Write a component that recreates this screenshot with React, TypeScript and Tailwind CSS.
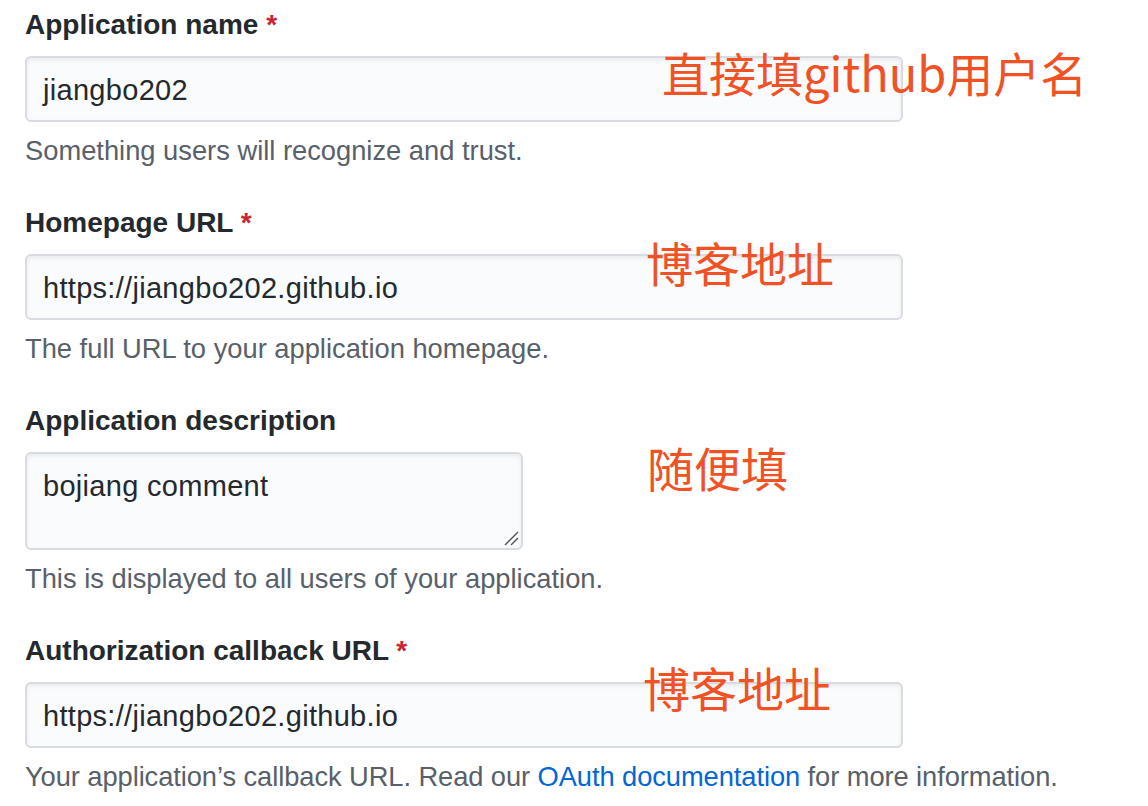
import React from "react";

const FONT = "font-['Liberation_Sans','Noto_Sans_CJK_SC',sans-serif]";

function Label({ text, required }: { text: string; required?: boolean }) {
  return (
    <div className="pt-[2px] text-[28px] leading-[40px] font-bold text-[#24292e]">
      {text}
      {required && <span className="text-[#cb2431]"> *</span>}
    </div>
  );
}

function Input({ value }: { value: string }) {
  return (
    <div className="mt-[11px] flex h-[66px] w-[878px] items-center rounded-[6px] border-2 border-[#d8dbdf] bg-[#fafbfc] pl-[16px] pt-[1px] shadow-[inset_0_2px_4px_rgba(27,31,35,0.075)]">
      <span className="text-[29px] leading-[40px] tracking-[0.3px] text-[#24292e]">{value}</span>
    </div>
  );
}

function Help({ children, className = "" }: { children: React.ReactNode; className?: string }) {
  return (
    <div className={`mt-[11px] text-[27.3px] leading-[36px] text-[#586069] ${className}`}>{children}</div>
  );
}

function Note({ text, className }: { text: string; className: string }) {
  return (
    <span
      className={`absolute font-['Noto_Sans_CJK_SC',sans-serif] text-[47px] leading-[47px] whitespace-nowrap text-[#f05226] ${className}`}
    >
      {text}
    </span>
  );
}

export default function App() {
  return (
    <div className={`relative h-[806px] w-full overflow-hidden bg-white pl-[25px] pt-[3px] ${FONT}`}>
      <div className="flex flex-col">
        <div className="mb-[32px]">
          <Label text="Application name" required />
          <Input value="jiangbo202" />
          <Help>Something users will recognize and trust.</Help>
        </div>
        <div className="mb-[32px]">
          <Label text="Homepage URL" required />
          <Input value="https://jiangbo202.github.io" />
          <Help>The full URL to your application homepage.</Help>
        </div>
        <div className="mb-[32px]">
          <Label text="Application description" />
          <div className="relative mt-[11px] h-[98px] w-[498px] rounded-[6px] border-2 border-[#d8dbdf] bg-[#fafbfc] pl-[16px] pt-[12px] shadow-[inset_0_2px_4px_rgba(27,31,35,0.075)]">
            <span className="text-[29px] leading-[40px] tracking-[0.3px] text-[#24292e]">bojiang comment</span>
            <svg className="absolute bottom-[2px] right-[2px]" width="16" height="16" viewBox="0 0 16 16">
              <line x1="15" y1="2" x2="2" y2="15" stroke="#555" strokeWidth="1.5" />
              <line x1="15" y1="8" x2="8" y2="15" stroke="#555" strokeWidth="1.5" />
            </svg>
          </div>
          <Help>This is displayed to all users of your application.</Help>
        </div>
        <div>
          <Label text="Authorization callback URL" required />
          <Input value="https://jiangbo202.github.io" />
          <Help className="tracking-[-0.08px]">
            Your application’s callback URL. Read our{" "}
            <span className="text-[#0366d6]">OAuth documentation</span> for more information.
          </Help>
        </div>
      </div>

      <Note text="直接填github用户名" className="left-[662px] top-[48px]" />
      <Note text="博客地址" className="left-[646px] top-[238px]" />
      <Note text="随便填" className="left-[647px] top-[443px]" />
      <Note text="博客地址" className="left-[643px] top-[663px]" />
    </div>
  );
}
